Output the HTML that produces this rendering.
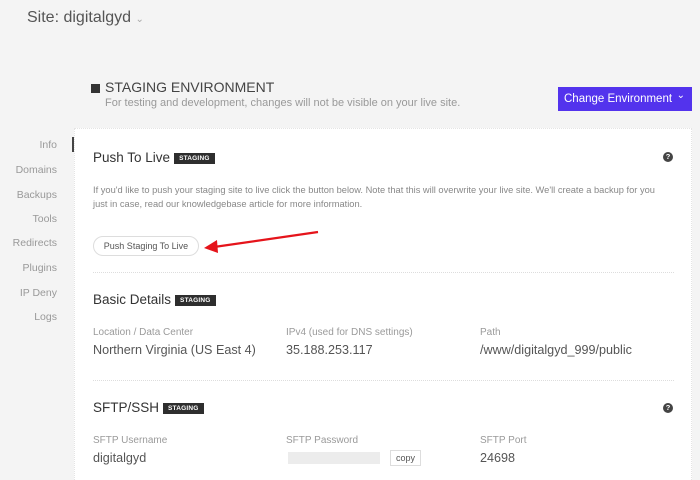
<!DOCTYPE html>
<html style="width:700px;height:480px;overflow:hidden"><head><style>
*{margin:0;padding:0;box-sizing:border-box}
body{width:700px;height:480px;background:#f4f4f4;font-family:"Liberation Sans",sans-serif;position:relative;overflow:hidden;color:#555}
.a{position:absolute;white-space:nowrap}
.nav{position:absolute;right:643px;font-size:10.5px;color:#999;text-align:right}
.card{position:absolute;left:74px;top:128px;width:618px;height:352px;background:#fff;border:1px dotted #e4e4e4;border-bottom:none}
.h{font-size:13.5px;color:#333}
.b{display:inline-block;background:#2e2e2e;color:#fff;font-size:6.5px;font-weight:bold;padding:2px 5px;vertical-align:2px;margin-left:4px;letter-spacing:.2px}
.lbl{font-size:10px;color:#9a9a9a}
.val{font-size:12.6px;color:#555}
.q{position:absolute;width:10px;height:10px;border-radius:50%;background:#444;color:#fff;font-size:7.5px;font-weight:bold;text-align:center;line-height:10px}
.hr{position:absolute;left:93px;width:581px;border-top:1px dotted #ddd}
</style></head><body>
<div class="a" style="left:27px;top:9px;font-size:16px;color:#555">Site: digitalgyd <span style="font-size:10px;color:#aaa">&#8964;</span></div>
<div class="a" style="left:91px;top:84px;width:9px;height:9px;background:#333"></div>
<div class="a" style="left:105px;top:79px;font-size:14px;color:#444">STAGING ENVIRONMENT</div>
<div class="a" style="left:105px;top:97px;font-size:11px;color:#999">For testing and development, changes will not be visible on your live site.</div>
<div class="a" style="left:558px;top:87px;width:134px;height:24px;background:#5333ed;color:#fff;font-size:11.5px;line-height:24px;padding-left:6px">Change Environment<span style="position:absolute;right:7px;top:-3px;font-size:10px">&#8964;</span></div>
<div class="nav" style="top:139px">Info</div>
<div class="nav" style="top:164px">Domains</div>
<div class="nav" style="top:189px">Backups</div>
<div class="nav" style="top:213px">Tools</div>
<div class="nav" style="top:237px">Redirects</div>
<div class="nav" style="top:262px">Plugins</div>
<div class="nav" style="top:287px">IP Deny</div>
<div class="nav" style="top:311px">Logs</div>
<div class="a" style="left:72px;top:137px;width:2px;height:15px;background:#444"></div>
<div class="card"></div>
<div class="a h" style="left:93px;top:150px">Push To Live<span class="b">STAGING</span></div>
<div class="q" style="left:663px;top:152px">?</div>
<div class="a" style="left:93px;top:183px;font-size:9.3px;color:#888;line-height:14px">If you'd like to push your staging site to live click the button below. Note that this will overwrite your live site. We'll create a backup for you<br>just in case, read our knowledgebase article for more information.</div>
<div class="a" style="left:93px;top:236px;width:106px;height:20px;border:1px solid #ddd;border-radius:10px;font-size:9px;color:#555;text-align:center;line-height:18px">Push Staging To Live</div>
<svg class="a" style="left:200px;top:228px" width="125" height="26"><line x1="118" y1="4" x2="14" y2="19" stroke="#e5141b" stroke-width="2.2"/><polygon points="4,20 17,12 18,25" fill="#e5141b"/></svg>
<div class="hr" style="top:272px"></div>
<div class="a h" style="left:93px;top:292px">Basic Details<span class="b">STAGING</span></div>
<div class="a lbl" style="left:93px;top:327px">Location / Data Center</div>
<div class="a val" style="left:93px;top:343px">Northern Virginia (US East 4)</div>
<div class="a lbl" style="left:286px;top:327px">IPv4 (used for DNS settings)</div>
<div class="a val" style="left:286px;top:343px">35.188.253.117</div>
<div class="a lbl" style="left:480px;top:327px">Path</div>
<div class="a val" style="left:480px;top:343px">/www/digitalgyd_999/public</div>
<div class="hr" style="top:380px"></div>
<div class="a h" style="left:93px;top:400px">SFTP/SSH<span class="b">STAGING</span></div>
<div class="q" style="left:663px;top:403px">?</div>
<div class="a lbl" style="left:93px;top:435px">SFTP Username</div>
<div class="a val" style="left:93px;top:451px">digitalgyd</div>
<div class="a lbl" style="left:286px;top:435px">SFTP Password</div>
<div class="a" style="left:288px;top:452px;width:92px;height:12px;background:#ececec"></div>
<div class="a" style="left:390px;top:450px;width:31px;height:16px;border:1px solid #ddd;font-size:9px;color:#555;text-align:center;line-height:14px">copy</div>
<div class="a lbl" style="left:480px;top:435px">SFTP Port</div>
<div class="a val" style="left:480px;top:451px">24698</div>
</body></html>
